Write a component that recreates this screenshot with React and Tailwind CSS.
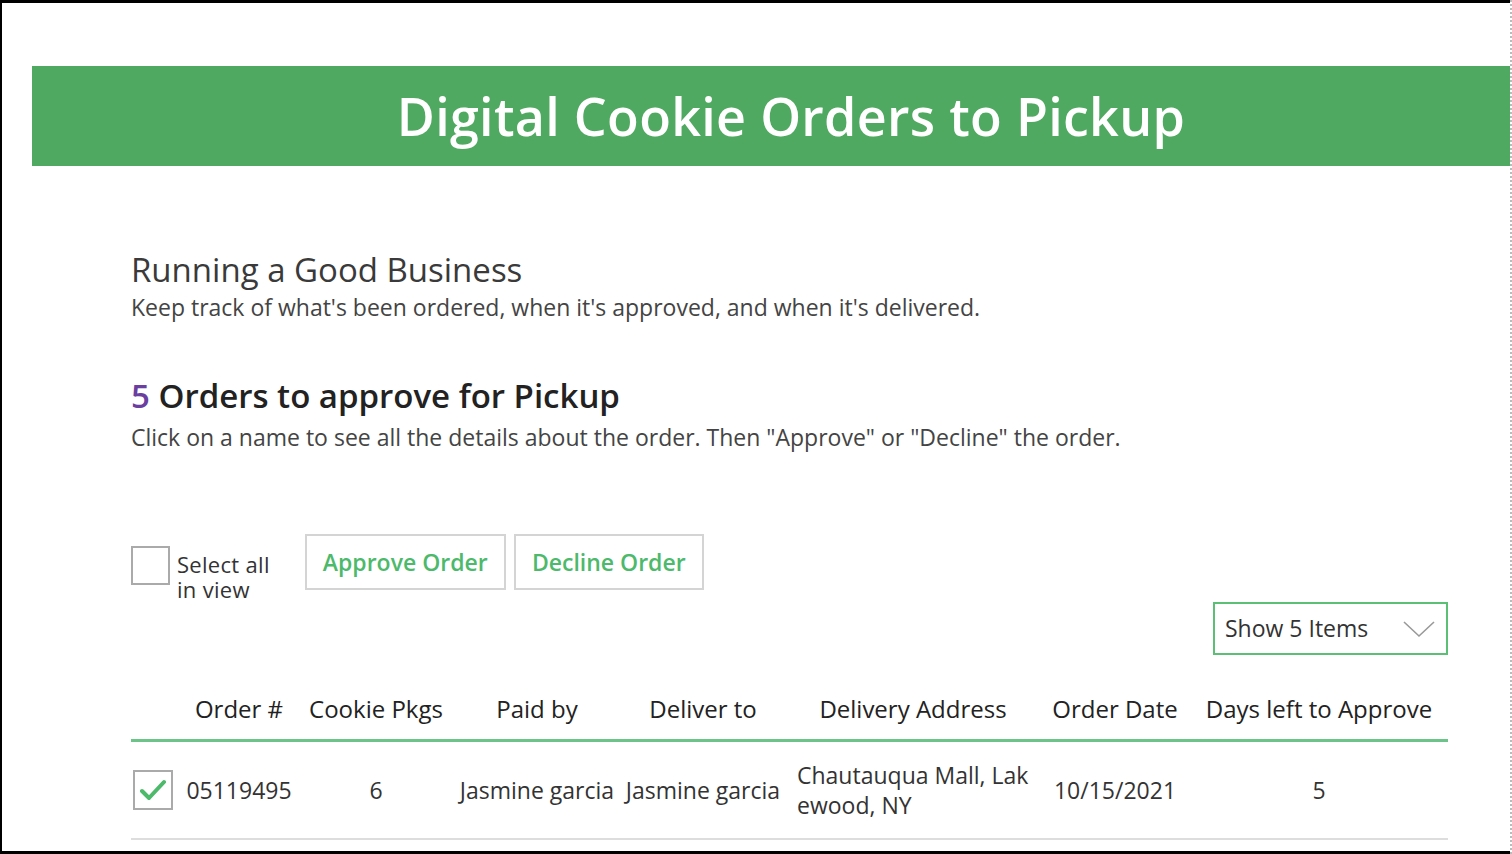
import React from 'react';

const cols = 'grid grid-cols-[49px_118px_156px_166px_166px_254px_150px_258px]';

function Check() {
    return (
        <svg width="26" height="22" viewBox="0 0 26 22">
            <path d="M2 12 L9 19 L24 3" fill="none" stroke="#4cb96b" strokeWidth="4" strokeLinecap="round" strokeLinejoin="round" />
        </svg>
    );
}

export default function App() {
    const headers = ['Order #', 'Cookie Pkgs', 'Paid by', 'Deliver to', 'Delivery Address', 'Order Date', 'Days left to Approve'];

    return (
        <div className="w-[1512px] h-[854px] bg-white overflow-hidden border-r-2 border-dotted border-[#bbbbbb]" style={{ fontFamily: '"Open Sans", "Noto Sans", sans-serif' }}>
            <div className="w-[1510px] h-full border-t-[3px] border-l-2 border-b-[3px] border-black">
                <div className="h-[63px]" />
                <div className="ml-[30px] h-[100px] bg-[#4fa960] flex items-center justify-center pl-[40px]">
                    <h1 className="text-[52px] font-semibold text-white tracking-[0.3px]">Digital Cookie Orders to Pickup</h1>
                </div>

                <div className="ml-[129px] w-[1317px]">
                    <div className="mt-[84px] text-[33px] leading-[40px] text-[#3a3a3a]">Running a Good Business</div>
                    <div className="mt-[1px] text-[23px] leading-[32px] text-[#444]">Keep track of what's been ordered, when it's approved, and when it's delivered.</div>

                    <div className="mt-[53px] text-[33px] leading-[40px] font-semibold text-[#222]">
                        <span className="text-[#6b3fa0]">5</span> Orders to approve for Pickup
                    </div>
                    <div className="mt-[5px] text-[23px] leading-[32px] text-[#444]">Click on a name to see all the details about the order. Then "Approve" or "Decline" the order.</div>

                    <div className="mt-[81px] flex items-start">
                        <div className="mt-[12px] w-[39px] h-[39px] border-2 border-[#aaaaaa] bg-white" />
                        <div className="ml-[7px] mt-[18px] text-[22px] text-[#333] tracking-[0.3px]">
                            <div className="h-[25px] leading-[24px]">Select all</div>
                            <div className="h-[25px] leading-[24px]">in view</div>
                        </div>
                        <button className="ml-[35px] w-[201px] h-[56px] border-2 border-[#d4d4d4] text-[23px] font-semibold text-[#4cb96b]">Approve Order</button>
                        <button className="ml-[8px] w-[190px] h-[56px] border-2 border-[#d4d4d4] text-[23px] font-semibold text-[#4cb96b]">Decline Order</button>
                    </div>

                    <div className="flex justify-end">
                        <div className="w-[235px] h-[53px] border-2 border-[#5cbf76] flex items-center justify-between pl-[10px] pr-[10px]">
                            <span className="text-[23px] text-[#333]">Show 5 Items</span>
                            <svg width="34" height="18" viewBox="0 0 34 18">
                                <path d="M2 2 L17 16 L32 2" fill="none" stroke="#999" strokeWidth="1.6" />
                            </svg>
                        </div>
                    </div>

                    <div className={`${cols} mt-[34px] h-[40px] items-center text-[24px] text-[#222]`}>
                        <div />
                        {headers.map((h) => (
                            <div key={h} className="text-center whitespace-nowrap">{h}</div>
                        ))}
                    </div>
                    <div className="h-[3px] bg-[#6cc489] mt-[10px]" />

                    <div className={`${cols} h-[96px] items-center text-[23px] text-[#333]`}>
                        <div className="pl-[2px]">
                            <div className="w-[40px] h-[40px] border-2 border-[#aaaaaa] flex items-center justify-center">
                                <Check />
                            </div>
                        </div>
                        <div className="text-center">05119495</div>
                        <div className="text-center">6</div>
                        <div className="text-center whitespace-nowrap">Jasmine garcia</div>
                        <div className="text-center whitespace-nowrap">Jasmine garcia</div>
                        <div className="pl-[11px] w-[247px] leading-[30px] break-all">Chautauqua Mall, Lakewood, NY</div>
                        <div className="text-center">10/15/2021</div>
                        <div className="text-center">5</div>
                    </div>
                    <div className="h-[2px] bg-[#dddddd]" />
                </div>
            </div>
        </div>
    );
}
